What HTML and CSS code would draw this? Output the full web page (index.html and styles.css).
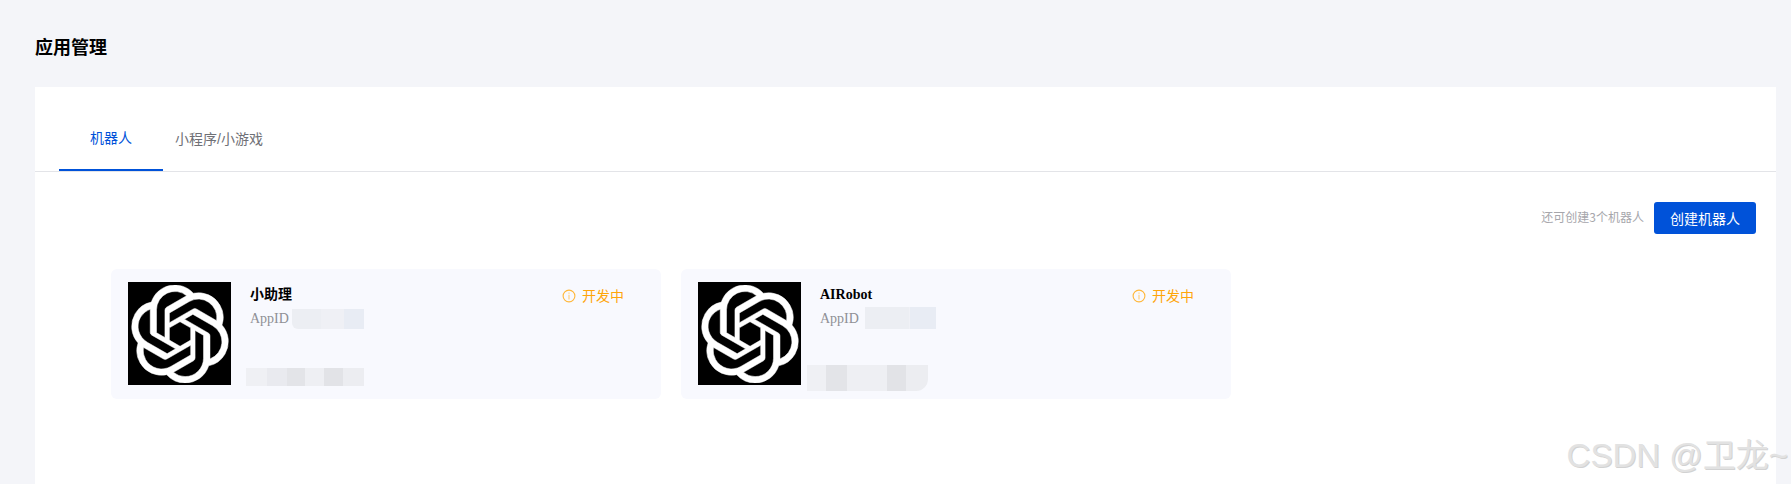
FILE: index.html
```html
<!DOCTYPE html>
<html lang="zh-CN">
<head>
<meta charset="UTF-8">
<meta name="viewport" content="width=device-width, initial-scale=1.0">
<title>应用管理</title>
<link rel="stylesheet" href="styles.css">
</head>
<body>

<svg class="svg-defs" width="0" height="0" aria-hidden="true">
  <symbol id="knot" viewBox="0 0 24 24">
    <path fill="#fff" stroke="#fff" stroke-width=".12" d="M22.2819 9.8211a5.9847 5.9847 0 0 0-.5157-4.9108 6.0462 6.0462 0 0 0-6.5098-2.9A6.0651 6.0651 0 0 0 4.9807 4.1818a5.9847 5.9847 0 0 0-3.9977 2.9 6.0462 6.0462 0 0 0 .7427 7.0966 5.98 5.98 0 0 0 .511 4.9107 6.051 6.051 0 0 0 6.5146 2.9001A5.9847 5.9847 0 0 0 13.2599 24a6.0557 6.0557 0 0 0 5.7718-4.2058 5.9894 5.9894 0 0 0 3.9977-2.9001 6.0557 6.0557 0 0 0-.7475-7.0729zm-9.022 12.6081a4.4755 4.4755 0 0 1-2.8764-1.0408l.1419-.0804 4.7783-2.7582a.7948.7948 0 0 0 .3927-.6813v-6.7369l2.02 1.1686a.071.071 0 0 1 .038.052v5.5826a4.504 4.504 0 0 1-4.4945 4.4944zm-9.6607-4.1254a4.4708 4.4708 0 0 1-.5346-3.0137l.142.0852 4.783 2.7582a.7712.7712 0 0 0 .7806 0l5.8428-3.3685v2.3324a.0804.0804 0 0 1-.0332.0615L9.74 19.9502a4.4992 4.4992 0 0 1-6.1408-1.6464zM2.3408 7.8956a4.485 4.485 0 0 1 2.3655-1.9728V11.6a.7664.7664 0 0 0 .3879.6765l5.8144 3.3543-2.0201 1.1685a.0757.0757 0 0 1-.071 0l-4.8303-2.7865A4.504 4.504 0 0 1 2.3408 7.872zm16.5963 3.8558L13.1038 8.364 15.1192 7.2a.0757.0757 0 0 1 .071 0l4.8303 2.7913a4.4944 4.4944 0 0 1-.6765 8.1042v-5.6772a.79.79 0 0 0-.407-.667zm2.0107-3.0231l-.142-.0852-4.7735-2.7818a.7759.7759 0 0 0-.7854 0L9.409 9.2297V6.8974a.0662.0662 0 0 1 .0284-.0615l4.8303-2.7866a4.4992 4.4992 0 0 1 6.6802 4.66zM8.3065 12.863l-2.02-1.1638a.0804.0804 0 0 1-.038-.0567V6.0742a4.4992 4.4992 0 0 1 7.3757-3.4537l-.142.0805L8.704 5.459a.7948.7948 0 0 0-.3927.6813zm1.0976-2.3654l2.602-1.4998 2.6069 1.4998v2.9994l-2.5974 1.4997-2.6067-1.4997Z"/>
  </symbol>
  <symbol id="info" viewBox="0 0 14 14">
    <circle cx="7" cy="7" r="5.9" fill="none" stroke="#ffb73a" stroke-width="1.1"/>
    <path fill="#ffcf80" d="M6.4 3.4h1.2v1.3H6.4zM6.4 5.8h1.2v4.8H6.4z"/>
  </symbol>
</svg>

<h1 class="page-title">应用管理</h1>

<div class="panel">
  <div class="tabs">
    <a class="tab active">机器人</a>
    <a class="tab">小程序/小游戏</a>
  </div>

  <div class="toolbar">
    <span class="quota">还可创建3个机器人</span>
    <button class="btn-create">创建机器人</button>
  </div>

  <div class="app-list">
    <div class="app-card">
      <div class="app-logo"><svg><use href="#knot"/></svg></div>
      <div class="app-info">
        <div class="app-name">小助理</div>
        <div class="app-id">AppID<span class="mosaic mosaic-id-a"></span></div>
        <div class="mosaic mosaic-foot-a"></div>
      </div>
      <div class="app-status"><svg><use href="#info"/></svg>开发中</div>
    </div>

    <div class="app-card">
      <div class="app-logo"><svg><use href="#knot"/></svg></div>
      <div class="app-info">
        <div class="app-name">AIRobot</div>
        <div class="app-id">AppID<span class="mosaic mosaic-id-b"></span></div>
        <div class="mosaic mosaic-foot-b"></div>
      </div>
      <div class="app-status"><svg><use href="#info"/></svg>开发中</div>
    </div>
  </div>
</div>

<div class="watermark">CSDN @卫龙~</div>

</body>
</html>
```

FILE: styles.css
```css
:root {
  --primary-color: #0052d9;
  --background: #f4f5f9;
  --card-bg: #f8f9fe;
}
html, body {
  height: 100%;
}
body {
  position: relative;
  margin: 0;
  overflow: hidden;
  background: var(--background);
  font-family: "Noto Sans CJK SC", sans-serif;
  font-size: 14px;
  display: flex;
  flex-direction: column;
  padding: 0 15px 0 35px;
  box-sizing: border-box;
}
.svg-defs {
  position: absolute;
}
.page-title {
  margin: 0;
  height: 87px;
  line-height: 92px;
  font-size: 18px;
  font-weight: 700;
  color: #000;
}
.panel {
  flex: 1;
  background: #fff;
}
.tabs {
  display: flex;
  height: 84px;
  padding: 0 0 0 24px;
  border-bottom: 1px solid #e3e4e8;
  box-sizing: content-box;
}
.tab {
  display: flex;
  align-items: center;
  justify-content: center;
  height: 84px;
  padding: 17px 31px 0;
  box-sizing: border-box;
  font-family: "Liberation Sans", "Noto Sans CJK SC", sans-serif;
  color: #6f7076;
}
.tab + .tab {
  padding: 17px 12px 0;
}
.tab.active {
  color: var(--primary-color);
  border-bottom: 2px solid var(--primary-color);
}
.toolbar {
  display: flex;
  justify-content: flex-end;
  align-items: center;
  gap: 10px;
  padding: 30px 20px 0 0;
}
.quota {
  font-size: 12px;
  line-height: 16px;
  margin-top: -2px;
  color: #a6a6ab;
}
.btn-create {
  width: 102px;
  height: 32px;
  border: none;
  border-radius: 3px;
  background: var(--primary-color);
  color: #fff;
  font-family: inherit;
  font-size: 14px;
}
.app-list {
  display: flex;
  gap: 20px;
  padding: 35px 0 0 76px;
}
.app-card {
  display: flex;
  width: 550px;
  height: 130px;
  padding: 13px 37px 14px 17px;
  box-sizing: border-box;
  background: var(--card-bg);
  border-radius: 6px;
}
.app-logo {
  flex: none;
  width: 103px;
  height: 103px;
  background: #000;
  display: flex;
  align-items: center;
  justify-content: center;
}
.app-logo svg {
  width: 98px;
  height: 98px;
}
.app-info {
  flex: 1;
  min-width: 0;
  padding: 3px 0 0 19px;
  font-family: "Liberation Serif", "Noto Sans CJK SC", serif;
}
.app-name {
  font-weight: 700;
  line-height: 20px;
  color: #000;
}
.app-id {
  display: flex;
  height: 23px;
  margin-top: 4px;
  line-height: 20px;
  color: #8f9096;
}
.app-status {
  flex: none;
  display: flex;
  align-items: center;
  gap: 6px;
  height: 20px;
  margin-top: 3px;
  color: #ffa50a;
}
.app-status svg {
  width: 14px;
  height: 14px;
  margin-top: 2px;
}
/* 打码区域 */
.mosaic {
  display: block;
  flex: none;
}
.mosaic-id-a {
  width: 72px;
  height: 20px;
  margin: 0 0 0 3px;
  background: linear-gradient(to right, #eceef3 0 40%, #eff0f5 40% 72%, #e8ecf4 72%);
  border-radius: 0 0 0 6px;
}
.mosaic-foot-a {
  width: 118px;
  height: 18px;
  margin: 36px 0 0 -4px;
  background: linear-gradient(to right, #eff0f4 0 18%, #e9eaef 18% 35%, #e3e4e8 35% 50%, #eeeff3 50% 66%, #e2e3e7 66% 82%, #ecedf1 82%);
}
.mosaic-id-b {
  width: 71px;
  height: 22px;
  margin: -2px 0 0 6px;
  background: linear-gradient(to right, #eceef3 0 62%, #f0f1f6 62% 63%, #e8ecf4 63%);
}
.mosaic-foot-b {
  width: 121px;
  height: 26px;
  margin: 33px 0 0 -13px;
  background: linear-gradient(to right, #eff0f4 0 16%, #e3e4e8 16% 33%, #eeeff3 33% 66%, #e2e3e7 66% 82%, #ecedf1 82%);
  border-radius: 0 0 12px 0;
}
.watermark {
  position: absolute;
  right: 3px;
  bottom: 8px;
  font-family: "Liberation Sans", "Noto Sans CJK SC", sans-serif;
  font-size: 33px;
  line-height: 40px;
  white-space: nowrap;
  color: #e2e2e2;
  text-shadow: 1px 1px 0 #d2d2d2;
}
```
